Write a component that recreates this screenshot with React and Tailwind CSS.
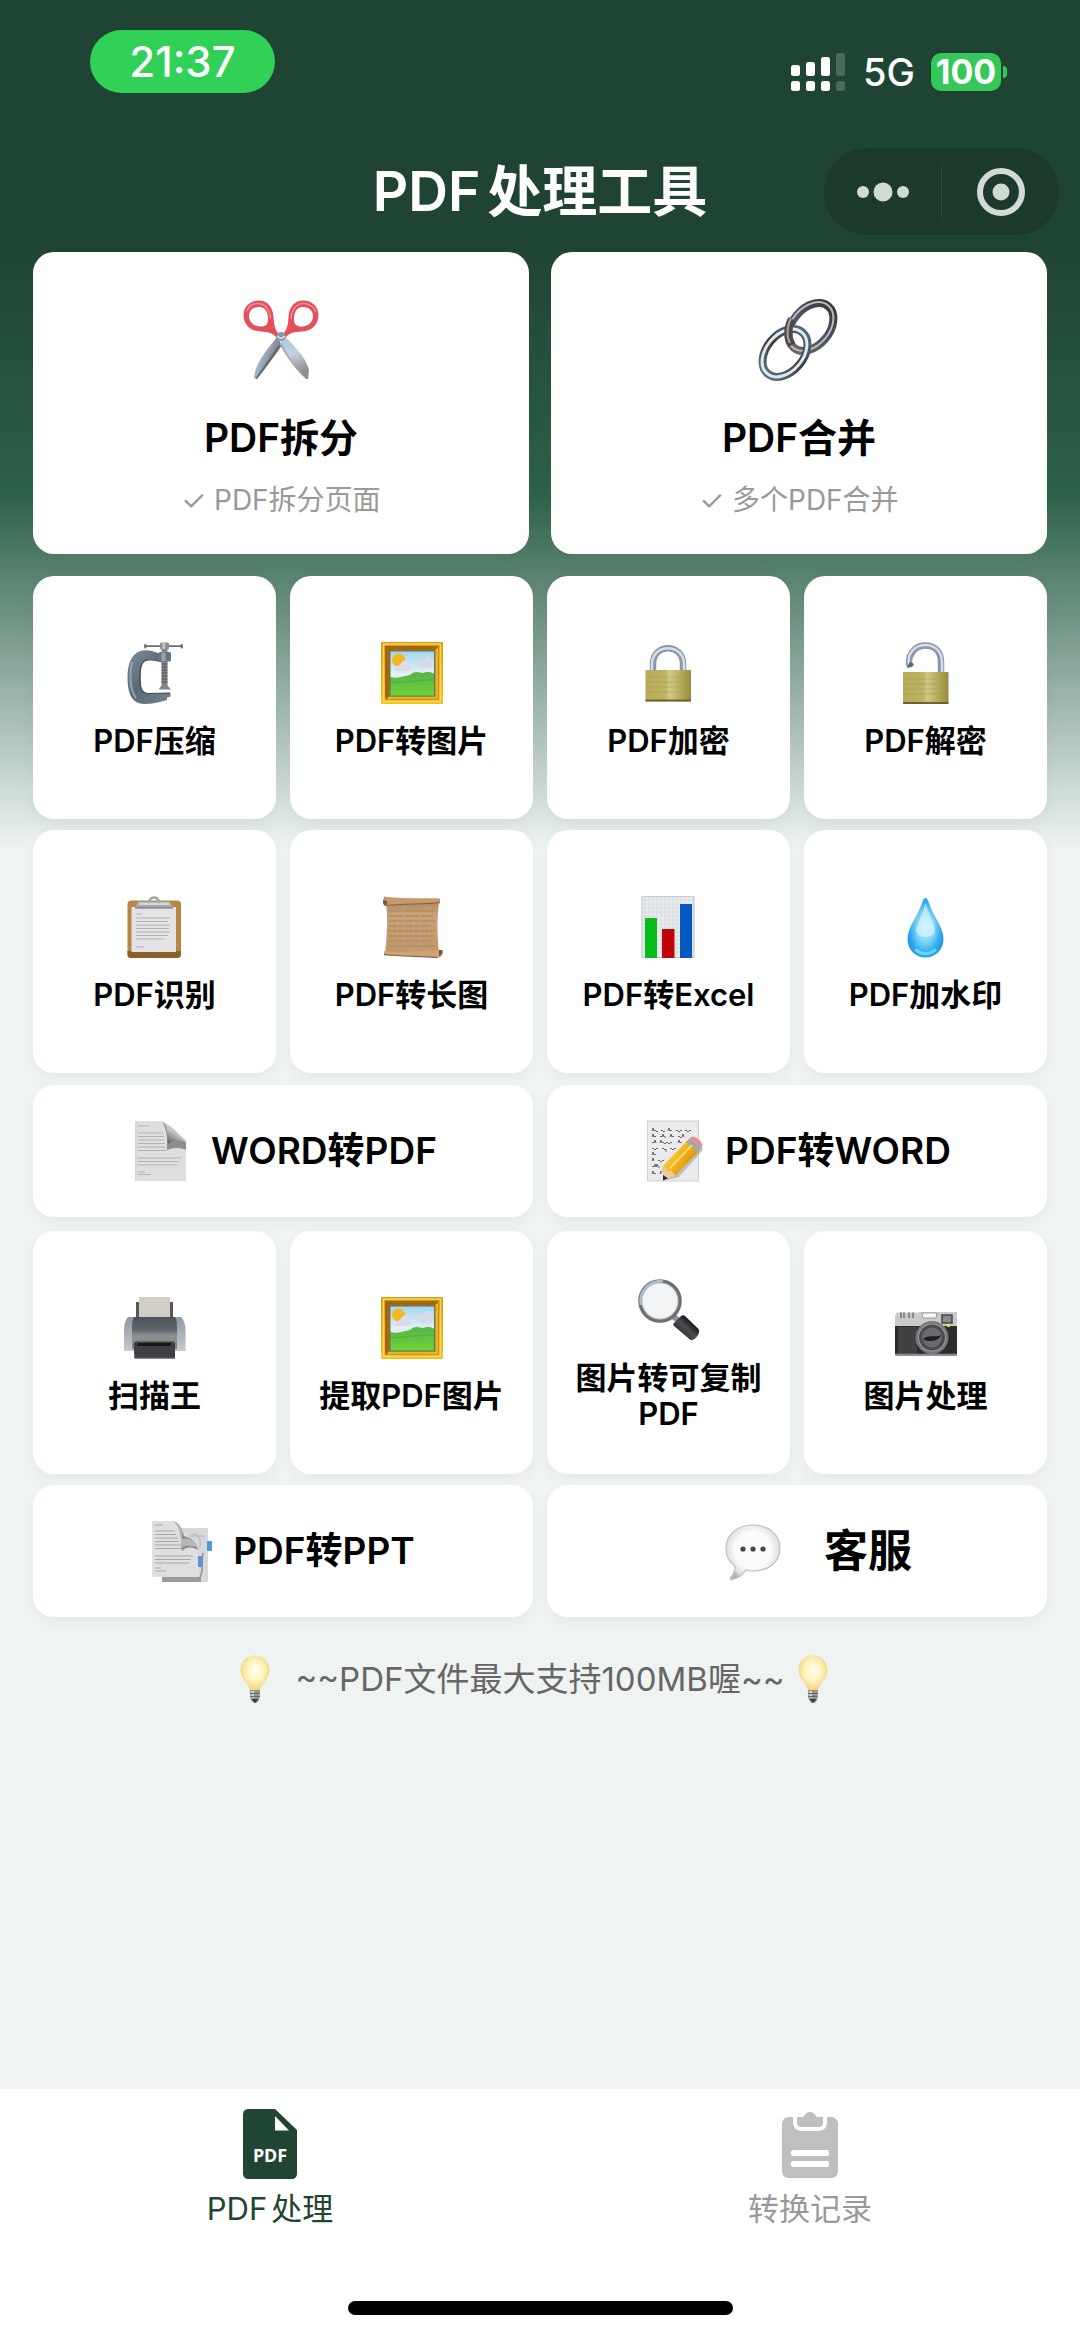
import { useState } from 'react'

/* ---------- Icons for the two large cards (80 x 80) ---------- */

const ScissorsIcon = () => (
    <svg viewBox="0 0 80 80" className="w-20 h-20" aria-hidden="true">
        <defs>
            <linearGradient id="bladeL" x1="0" y1="0" x2="1" y2="0.6">
                <stop offset="0.25" stopColor="#a9cfe0" />
                <stop offset="0.6" stopColor="#8f9aa6" />
                <stop offset="1" stopColor="#5d5458" />
            </linearGradient>
            <linearGradient id="bladeR" x1="0" y1="0" x2="0.3" y2="1">
                <stop offset="0" stopColor="#9ccbe2" />
                <stop offset="0.5" stopColor="#c3d3dc" />
                <stop offset="1" stopColor="#8d8a92" />
            </linearGradient>
        </defs>
        <path d="M36 37 C27 48 17 60 14 72 L13 78 L16 79 C24 69 33 56 41 45 Z" fill="url(#bladeL)" />
        <path d="M41 44 L37 51 L16 79 L14.500 78.500 L37 46 Z" fill="#6b6468" />
        <path d="M43 36 C54 46 65 58 68 70 L67 79 L65 79 C56 70 47 58 39 44 Z" fill="url(#bladeR)" />
        <path d="M41 44 C48 58 56 69 66 79 L65 79 C56 71 46 58 39.500 46 Z" fill="#b1a4ab" />
        <path
            fillRule="evenodd"
            d="M17 0.500 C27 0 32 8 32.500 17 C33 25 34 30 38 34 L36 38 C31 32 26 32 20 31.500 C9 31.500 2.500 24 2.500 15 C2.500 7 8.500 1 17 0.500 Z M18 7 C11.500 7 8 11 8 16 C8 22 13 26.500 19 26.500 C25 26.500 27.500 24 27 18 C26.500 11 24 7 18 7 Z"
            fill="#e2505b"
        />
        <path
            fillRule="evenodd"
            d="M63 0.500 C53 0 48 8 47.500 17 C47 25 46 30 42 34 L44 38 C49 32 54 32 60 31.500 C71 31.500 77.500 24 77.500 15 C77.500 7 71.500 1 63 0.500 Z M62 7 C68.500 7 72 11 72 16 C72 22 67 26.500 61 26.500 C55 26.500 52.500 24 53 18 C53.500 11 56 7 62 7 Z"
            fill="#e2505b"
        />
        <path d="M6 11 C8 5 13 3 18 3.500 C25 4 29 11 29.500 19" fill="none" stroke="#f58b92" strokeWidth="1.500" />
        <path d="M50 19 C50.500 9 56 3 63 3.500 C69 4 73 7 75 12" fill="none" stroke="#f58b92" strokeWidth="1.500" />
        <circle cx="40" cy="36.500" r="4.500" fill="#8899a8" />
        <path d="M36.500 36 C38 39 42 39 43.500 36" fill="none" stroke="#e6f1f7" strokeWidth="1.500" />
    </svg>
)

const LinkIcon = () => (
    <svg viewBox="0 0 80 80" className="w-20 h-20 overflow-visible" aria-hidden="true">
        <defs>
            <linearGradient id="ringA" x1="0" y1="0" x2="1" y2="0">
                <stop offset="0" stopColor="#6d6467" />
                <stop offset="0.5" stopColor="#4b5562" />
                <stop offset="1" stopColor="#3f3739" />
            </linearGradient>
            <linearGradient id="ringB" x1="0" y1="0" x2="1" y2="0">
                <stop offset="0" stopColor="#57707f" />
                <stop offset="0.5" stopColor="#3f3c3b" />
                <stop offset="1" stopColor="#4f6675" />
            </linearGradient>
        </defs>
        <g fill="none">
            <ellipse cx="52" cy="27" rx="27" ry="18.500" transform="rotate(-50 52 27)" stroke="url(#ringA)" strokeWidth="8" />
            <ellipse cx="51.500" cy="26.500" rx="27.500" ry="19" transform="rotate(-50 51.500 26.500)" stroke="#b9bdc6" strokeWidth="2" />
            <ellipse cx="26" cy="53" rx="27" ry="18.500" transform="rotate(-50 26 53)" stroke="url(#ringB)" strokeWidth="8" />
            <ellipse cx="25.500" cy="53" rx="27" ry="18.500" transform="rotate(-50 25.500 53)" stroke="#dfe9f0" strokeWidth="3" />
            {/* piece of the upper ring that passes over the lower one */}
            <path d="M33 19 C28 28 28 38 33 45" stroke="#4e4648" strokeWidth="8" />
            <path d="M32 18 C27 28 28 38 31 43" stroke="#a29ea3" strokeWidth="2" />
        </g>
    </svg>
)

/* ---------- Icons for the tiles (62 x 62) ---------- */

const Glyph = ({ children }) => (
    <svg viewBox="0 0 62 62" className="w-[62px] h-[62px] shrink-0 overflow-visible" aria-hidden="true">
        {children}
    </svg>
)

const ClampIcon = () => (
    <Glyph>
        <defs>
            <linearGradient id="clampBody" x1="0" y1="0" x2="1" y2="1">
                <stop offset="0" stopColor="#7f919c" />
                <stop offset="0.45" stopColor="#5b6b76" />
                <stop offset="1" stopColor="#71838e" />
            </linearGradient>
        </defs>
        <path d="M38 13 C31 9 22 7 16 9 C6 13 3.500 24 3.500 36 C3.500 53 9 62 20 62 C29 62 36 60 43 58 L43 55.500 L46.500 54.500 L46.500 51 L24 51.500 C18 51 16.500 46 16.500 36 C16.500 25 18 18.500 24 18.500 C30 18.500 34 19.500 38 20.500 Z" fill="url(#clampBody)" />
        <path d="M8 20 C5 32 6 48 12 56" fill="none" stroke="#93a5b0" strokeWidth="2" />
        <path d="M24 18 C17 18 16 26 16 36 C16 46 17 51 24 51.500 L46 51" fill="none" stroke="#3c4750" strokeWidth="1.200" />
        <rect x="37.500" y="6" width="6" height="38" fill="#848484" />
        <path d="M37.500 22 H43.500 M37.500 25 H43.500 M37.500 28 H43.500 M37.500 31 H43.500 M37.500 34 H43.500 M37.500 37 H43.500 M37.500 40 H43.500" stroke="#4f4f50" strokeWidth="1" />
        <rect x="34.500" y="10" width="12.500" height="9.500" rx="1.500" fill="#667681" />
        <rect x="37.500" y="10.500" width="4" height="8.500" fill="#94a4ae" />
        <path d="M21 4.200 H58" stroke="#6d6d6d" strokeWidth="1.800" />
        <rect x="20" y="2" width="2.500" height="4.500" rx="1" fill="#7b7b7b" />
        <rect x="56.500" y="2" width="2.500" height="4.500" rx="1" fill="#7b7b7b" />
        <rect x="36" y="0.500" width="9" height="7" rx="1.500" fill="#8b8f92" />
        <rect x="38.500" y="1" width="2.500" height="6" fill="#c6c9cb" />
        <path d="M38 43 H43 L47 47.500 H34.500 Z" fill="#7c868d" />
    </Glyph>
)

const PictureIcon = () => (
    <Glyph>
        <defs>
            <linearGradient id="picFrame" x1="0" y1="0" x2="0" y2="1">
                <stop offset="0" stopColor="#d49a18" />
                <stop offset="1" stopColor="#f3c125" />
            </linearGradient>
            <linearGradient id="picSky" x1="0" y1="0" x2="0" y2="1">
                <stop offset="0" stopColor="#9fd6ef" />
                <stop offset="0.5" stopColor="#e6eef5" />
            </linearGradient>
            <linearGradient id="picGrass" x1="0" y1="0" x2="0" y2="1">
                <stop offset="0" stopColor="#55b34a" />
                <stop offset="1" stopColor="#6fd436" />
            </linearGradient>
        </defs>
        <rect width="62" height="62" rx="1" fill="url(#picFrame)" />
        <rect x="2.500" y="2" width="57" height="57.500" fill="none" stroke="#f9d64f" strokeWidth="1.500" />
        <path d="M4 4 H58 L53 9 H9 V54 L4 58 Z" fill="#a4660f" />
        <path d="M58 4 V58 H4 L9 54 H53.500 V9 Z" fill="#cf9112" />
        <path d="M56 7 V56 H7" fill="none" stroke="#efc02f" strokeWidth="1.500" />
        <rect x="9" y="9" width="44.500" height="45" fill="url(#picSky)" />
        <circle cx="17.500" cy="18" r="6.500" fill="#f3b81a" />
        <path d="M14 28 C13 24 18 25 20 21 C23 17 28 18 28 23 C32 25 30 29 26 29 H16 Z" fill="#dcdbe8" />
        <path d="M34 20 C35 17 39 16 41 19 C44 17 44 13 48 14 C53 16 53 22 50 26 H42 C39 23 35 24 34 20 Z" fill="#d5dbea" />
        <path d="M9 35 C18 37 23 34 29 33 C35 28 38 31 42 31 C47 29 50 30 53.500 32 V54 H9 Z" fill="url(#picGrass)" />
        <path d="M9 40 C21 43 31 37 53.500 38" fill="none" stroke="#4fb03e" strokeWidth="1.200" />
        <rect x="9" y="9" width="44.500" height="45" fill="none" stroke="#5f7a6e" strokeWidth="1" />
    </Glyph>
)

const BrassGradient = ({ id }) => (
    <defs>
        <linearGradient id={id} x1="0" y1="0" x2="1" y2="0">
            <stop offset="0" stopColor="#b8aa58" />
            <stop offset="0.45" stopColor="#bfb365" />
            <stop offset="0.52" stopColor="#d2ca8c" />
            <stop offset="0.75" stopColor="#b9ad5d" />
            <stop offset="1" stopColor="#95893f" />
        </linearGradient>
    </defs>
)

const LockIcon = () => (
    <Glyph>
        <BrassGradient id="brassA" />
        <path d="M15 30 V22 C15 1 45 1 45 22 V30" fill="none" stroke="#8b97a6" strokeWidth="6.500" />
        <path d="M14 30 V22 C14 1 46 1 46 22 V30" fill="none" stroke="#d3deec" strokeWidth="2.500" />
        <rect x="7.500" y="28" width="45.500" height="31.500" rx="1" fill="url(#brassA)" />
        <path d="M8 35 H52 M8 40 H52 M8 45 H52 M8 50 H52" stroke="#ada04c" strokeWidth="0.600" />
        <rect x="7.500" y="57.500" width="45.500" height="2" fill="#6f642b" />
    </Glyph>
)

const UnlockIcon = () => (
    <Glyph>
        <BrassGradient id="brassB" />
        <path d="M15.500 25 C11 17 18 3.500 30 3.500 C41 3.500 46 11 46 20 V32" fill="none" stroke="#8b97a6" strokeWidth="6.500" />
        <path d="M14.500 23 C11 15 18 3 30 3 C42 3 47 12 47 20 V31" fill="none" stroke="#d3deec" strokeWidth="2.500" />
        <path d="M15 20 L19 22 L17 25 L12 25 Z" fill="#5e6670" />
        <rect x="8" y="30" width="45.500" height="32" rx="1" fill="url(#brassB)" />
        <path d="M8 37 H53 M8 42 H53 M8 47 H53 M8 52 H53" stroke="#ada04c" strokeWidth="0.600" />
        <rect x="8" y="60" width="45.500" height="2" fill="#6f642b" />
    </Glyph>
)

const ClipboardIcon = () => (
    <Glyph>
        <rect x="3.500" y="4.500" width="53.500" height="57.500" rx="4" fill="#b78745" />
        <path d="M3.500 55 H57 V58 C57 61 55 62 53 62 H7 C5 62 3.500 61 3.500 58 Z" fill="#8b5f28" />
        <rect x="7.500" y="11" width="44.500" height="45" fill="#e4e4e6" />
        <path d="M12 18 H18 M12 22 H46 M12 25.500 H44 M12 29 H46 M12 32.500 H45 M12 36 H46 M12 39.500 H44 M12 43 H40 M12 51 H20" stroke="#b3b3b6" strokeWidth="1" />
        <path d="M14 5.500 H46 L49 12 H11 Z" fill="#a6a8ac" />
        <path d="M15 6.500 H45 L46 9 H14 Z" fill="#d3d5d8" />
        <path d="M11 12 H49" stroke="#6d6d70" strokeWidth="1" />
        <path d="M24 6 C26 6 25 1.500 30 1.500 C35 1.500 34 6 36 6" fill="none" stroke="#a3a6ab" strokeWidth="2.500" />
    </Glyph>
)

const ScrollIcon = () => (
    <Glyph>
        <defs>
            <linearGradient id="parchment" x1="0" y1="0" x2="0" y2="1">
                <stop offset="0" stopColor="#b08a61" />
                <stop offset="0.25" stopColor="#c8a176" />
                <stop offset="1" stopColor="#c2996c" />
            </linearGradient>
        </defs>
        <path d="M5 7 C7 22 6 40 4 57 L58 57 C56 40 56 22 58 6 Z" fill="url(#parchment)" />
        <path d="M7 15 H54 M7 20 H52 M7 25 H55 M7 30 H50 M7 35 H54 M7 40 H53 M7 45 H51 M7 50 H54" stroke="#a8835c" strokeWidth="1" strokeDasharray="9 1 5 1" />
        <path d="M3 0.500 C20 3 42 2 59 2.500 L59 6.500 C42 9 22 7.500 6 10 C3 11 2 8 2 6 Z" fill="#c59a6c" />
        <path d="M2 4 L6 5 L6 9.500 C3 10 2 8 2 4 Z" fill="#7b5735" />
        <path d="M6 9.500 C22 7.500 42 8.500 59 6.500" fill="none" stroke="#856040" strokeWidth="1.200" />
        <path d="M3 55 C22 58 42 54 61 54 L61 59 C60 62 57 61.500 55 61.500 L3 59.500 Z" fill="#cea377" />
        <path d="M3 58.500 C20 60.500 40 60 57 61.500" fill="none" stroke="#8c6744" strokeWidth="1.200" />
        <path d="M58 54 H61.500 V58 L58 60 Z" fill="#765334" />
    </Glyph>
)

const ChartIcon = () => (
    <Glyph>
        <rect x="3.500" y="0" width="53" height="62" fill="#e9ecef" />
        <path
            d="M7 0 V62 M11 0 V62 M15 0 V62 M19 0 V62 M23 0 V62 M27 0 V62 M31 0 V62 M35 0 V62 M39 0 V62 M43 0 V62 M47 0 V62 M51 0 V62 M55 0 V62 M3 4 H56 M3 8 H56 M3 12 H56 M3 16 H56 M3 20 H56 M3 24 H56 M3 28 H56 M3 32 H56 M3 36 H56 M3 40 H56 M3 44 H56 M3 48 H56 M3 52 H56 M3 56 H56"
            stroke="#d3dae1"
            strokeWidth="0.800"
        />
        <rect x="4" y="0.500" width="52" height="61" fill="none" stroke="#c7c9cb" />
        <rect x="7" y="22" width="12" height="40" fill="#06bd17" />
        <rect x="24" y="33" width="12.500" height="29" fill="#c00508" />
        <rect x="42" y="8" width="12" height="54" fill="#0458c2" />
    </Glyph>
)

const DropIcon = () => (
    <Glyph>
        <defs>
            <radialGradient id="dropFill" cx="0.5" cy="0.500" r="0.550">
                <stop offset="0" stopColor="#c9f1fd" />
                <stop offset="0.45" stopColor="#7fd5f8" />
                <stop offset="0.8" stopColor="#2aa8ee" />
                <stop offset="1" stopColor="#2397e0" />
            </radialGradient>
        </defs>
        <path d="M30.500 2 C32 2 33 4 34 7 C38 20 48.500 31 48.500 43 C48.500 54 40 61.500 30.500 61.500 C21 61.500 12.500 54 12.500 43 C12.500 31 23 20 27 7 C28 4 29 2 30.500 2 Z" fill="url(#dropFill)" />
        <path d="M30.500 7 C33 17 40 27 40 35 C38 43 23 43 21 35 C22 27 28 17 30.500 7 Z" fill="#e2f8ff" opacity="0.6" />
        <path d="M21 54 C27 59 34 59 40 54" fill="none" stroke="#63d6fb" strokeWidth="3" strokeLinecap="round" />
    </Glyph>
)

const PageIcon = () => (
    <Glyph>
        <defs>
            <linearGradient id="curlShade" x1="0.300" y1="1" x2="0.900" y2="0.100">
                <stop offset="0" stopColor="#57585a" />
                <stop offset="0.5" stopColor="#c2c3c5" />
                <stop offset="1" stopColor="#f0f0f1" />
            </linearGradient>
        </defs>
        <path d="M6 1 H34 L57 20 V61 H6 Z" fill="#dedee0" />
        <path d="M9 6 H20 M9 13 H34 M9 16.500 H35 M9 20 H35 M9 23.500 H36 M9 27 H36 M9 30.500 H38 M9 38 H52 M9 41.500 H50 M9 45 H48 M9 52 H16 M9 54.500 H22" stroke="#b2b3b6" strokeWidth="1" />
        <path d="M33 2 C39 10 38 21 38 30 C43 28 50 27 57 30 V22 Z" fill="#77787b" opacity="0.8" />
        <path d="M32 1 C40 5 38 16 39 24 C44 19 52 20 57 23 C51 14 42 5 32 1 Z" fill="url(#curlShade)" />
        <rect x="6.500" y="1.500" width="1" height="59" fill="#cfcfd1" />
    </Glyph>
)

const MemoIcon = () => (
    <Glyph>
        <defs>
            <linearGradient id="pencilBody" x1="0" y1="0" x2="1" y2="0.700">
                <stop offset="0" stopColor="#fbd957" />
                <stop offset="0.5" stopColor="#f5b81c" />
                <stop offset="1" stopColor="#c57f10" />
            </linearGradient>
        </defs>
        <rect x="4.500" y="1" width="51" height="60" fill="#ebebec" stroke="#d0d0d2" />
        <path
            d="M9 11 l1 -3 l1 3 q1 -2 2 0 t2 0 M18 11 q1 -2 2 0 t2 0 M25 11 l1 -3 l1 3 q1 -2 2 0 M33 11 q1 -2 2 0 t2 0 t2 0 M42 11 q1 -2 2 0 t2 0 t2 0 M9 17 l1 -3 l1 3 q1 -2 2 0 M17 17 q1 -2 2 0 l1 -3 l1 3 t2 0 M27 17 l1 -3 l1 3 q1 -2 2 0 M35 17 q1 -2 2 0 t2 0 l1 -3 l1 3 M9 23 q1 -2 2 0 l1 -3 l1 3 M17 23 l1 -3 l1 3 q1 -2 2 0 t2 0 t2 0 t2 0 t2 0 M35 23 l1 -3 l1 3 q1 -2 2 0 M9 29 q1 -2 2 0 t2 0 t2 0 M19 29 q1 -2 2 0 t2 0 l0 3 M27 29 q1 -2 2 0 t2 0 t2 0 M9 35 l1 -3 l1 3 q1 -2 2 0 M9 41 l1 -3 l1 3 M15 41 q1 -2 2 0 t2 0 t2 0 M9 47 q1 -2 2 0 l1 -3 l1 3 l1 -3 l1 3 t2 0 M9 54 l1 -3 l1 3 q1 -2 2 0 M17 54 l1 -3 l0 3"
            fill="none"
            stroke="#5a5a5d"
            strokeWidth="0.900"
        />
        <path d="M24 60 L36 57 L60 30 L56 22 Z" fill="#8a8a8d" opacity="0.45" />
        <path d="M19 47 L44 21 L56 31 L32 56 L21 60 Z" fill="url(#pencilBody)" />
        <path d="M19 47 C22 46 24 48 24 51 C28 50 31 52 32 56 L21 60 Z" fill="#eccb98" />
        <path d="M20 55 L25 58.500 L20 60.500 Z" fill="#2d2d2f" />
        <path d="M43 22 L47 18 L59 28 L55 32 Z" fill="#a4a6a9" />
        <path d="M47 18 C50 14 61 21 59 28 Z" fill="#ee8790" />
        <path d="M27 48 L49 25" stroke="#fde58a" strokeWidth="1.500" />
    </Glyph>
)

const PrinterIcon = () => (
    <Glyph>
        <defs>
            <linearGradient id="printerTop" x1="0" y1="0" x2="0" y2="1">
                <stop offset="0" stopColor="#4a525b" />
                <stop offset="0.4" stopColor="#5f666d" />
                <stop offset="0.6" stopColor="#8e9194" />
                <stop offset="1" stopColor="#7c7f82" />
            </linearGradient>
            <linearGradient id="printerSide" x1="0" y1="0" x2="0" y2="1">
                <stop offset="0" stopColor="#8f98a1" />
                <stop offset="1" stopColor="#c6c9ca" />
            </linearGradient>
        </defs>
        <rect x="12" y="5" width="3" height="18" fill="#55585b" />
        <rect x="46" y="5" width="3" height="18" fill="#55585b" />
        <rect x="15" y="0" width="31" height="23" fill="#d3cec5" />
        <path d="M4 20 H10 V54 H0 V32 C0 27 2 22 4 20 Z" fill="url(#printerSide)" />
        <path d="M57 20 H51 V54 H61.500 V32 C61.500 27 59 22 57 20 Z" fill="url(#printerSide)" />
        <path d="M10 20 H51 C53 23 53 27 53 32 V52 H8 V32 C8 27 8 23 10 20 Z" fill="url(#printerTop)" />
        <path d="M10 54 V47 C10 45 12 44.500 14 44.500 H48 C50 44.500 51 45 51 47 V61.500 H10.500 Z" fill="#3f4043" />
        <path d="M14 46 H47 V49 H13 Z" fill="#151618" />
        <path d="M10.500 61 H51" stroke="#6a6b6e" strokeWidth="1" />
    </Glyph>
)

const MagnifierIcon = () => (
    <Glyph>
        <defs>
            <linearGradient id="handle" x1="0" y1="1" x2="1" y2="0">
                <stop offset="0" stopColor="#101113" />
                <stop offset="0.5" stopColor="#4a4d50" />
                <stop offset="0.7" stopColor="#1b1c1e" />
                <stop offset="1" stopColor="#0b0b0c" />
            </linearGradient>
        </defs>
        <path d="M36 38 L42 43" stroke="#8f9397" strokeWidth="6" />
        <path d="M36 44 L43 37 C44 36 46 36 47 37 L60.500 50 C63 54 57 62 52.500 61 L36 47 C35 46 35 45 36 44 Z" fill="url(#handle)" />
        <circle cx="22" cy="22" r="20" fill="#f3f4f6" stroke="#6c6f73" strokeWidth="3.500" />
        <path d="M3 26 C0 12 12 1 25 2" fill="none" stroke="#a9bfd6" strokeWidth="2.500" />
        <circle cx="22" cy="22" r="18" fill="none" stroke="#b9bcc0" strokeWidth="1" />
    </Glyph>
)

const CameraIcon = () => (
    <Glyph>
        <rect x="0" y="27" width="62" height="31.500" fill="#2c2c2e" />
        <rect x="3" y="30" width="19" height="28" fill="#414144" />
        <path d="M0 20 C0 17 1 15.500 3 15.500 H23 L25 15 H62 V29 H0 Z" fill="#c9cacb" />
        <path d="M6 15.500 V21 M9 15.500 V21 M14 15.500 V21 M18 15.500 V21" stroke="#808185" strokeWidth="1.800" />
        <path d="M27 16 H42 L41 21 H28 Z" fill="#f7f7f7" stroke="#8a8b8d" strokeWidth="0.800" />
        <rect x="47" y="18" width="10" height="8" fill="#8b8c86" stroke="#454649" strokeWidth="1.500" />
        <circle cx="53.500" cy="28.500" r="1.800" fill="#f0e130" />
        <circle cx="37" cy="40.500" r="16.500" fill="#77797c" />
        <circle cx="37" cy="40.500" r="14" fill="#9b9da0" />
        <circle cx="37" cy="40.500" r="13" fill="#4a4b4e" />
        <circle cx="37" cy="40.500" r="10" fill="#6a6c6f" />
        <path d="M28 42 C34 37 41 41 46 38 C45 44 33 46 28 42 Z" fill="#1e1e20" />
        <path d="M0 57.500 H62" stroke="#8a8a8c" strokeWidth="1.500" />
    </Glyph>
)

const SlidesIcon = () => (
    <Glyph>
        <rect x="11" y="8" width="46" height="54" fill="#d8d8da" />
        <rect x="11" y="57" width="39" height="5" fill="#9b9b9e" />
        <path d="M42 14 C48 14 50 20 49 28 M38 16 H54" fill="none" stroke="#bfbfc2" strokeWidth="1.500" />
        <rect x="56" y="21" width="5" height="10" rx="1" fill="#4f97dd" />
        <path d="M1 1 H22 L47 25 V57 H1 Z" fill="#dfdfe1" />
        <path d="M4 5 H12 M4 11 H24 M4 14.500 H25 M4 18 H27 M4 21.500 H28 M4 25 H30 M4 28.500 H32 M4 36 H42 M4 39.500 H40 M4 43 H38 M4 48 H10 M4 51 H15" stroke="#a6a7aa" strokeWidth="1" />
        <path d="M22 1 C32 6 29 16 31 31 C36 26 42 27 47 30 C44 18 38 18 33 16 C31 8 28 3 22 1 Z" fill="#8d8e91" />
        <path d="M22 1 C30 3 32 10 31 19 C38 17 44 20 47 27 C45 27 36 24 31 27 C29 16 29 7 22 1 Z" fill="#b6b7b9" />
        <rect x="47" y="36" width="5" height="11" rx="1" fill="#4f97dd" />
        <path d="M52 33 C50 44 53 50 49 57" fill="none" stroke="#8f8f92" strokeWidth="1.500" />
    </Glyph>
)

const BubbleIcon = () => (
    <Glyph>
        <defs>
            <radialGradient id="bubble" cx="0.500" cy="0.450" r="0.550">
                <stop offset="0.6" stopColor="#fbfbfb" />
                <stop offset="0.9" stopColor="#dededf" />
                <stop offset="1" stopColor="#b7b7b8" />
            </radialGradient>
        </defs>
        <path d="M31 5 C47 5 58 15 58 28 C58 42 47 51 31 51 C28 51 26 51 24 50 C21 55 15 58.500 9 60 C8 59 8.500 58 9 57 C12 54 13 50 13 46 C7 42 4 36 4 28 C4 15 15 5 31 5 Z" fill="url(#bubble)" stroke="#c0c0c1" strokeWidth="1.200" />
        <circle cx="21" cy="29" r="2.600" fill="#454547" />
        <circle cx="31" cy="29" r="2.600" fill="#454547" />
        <circle cx="41" cy="29" r="2.600" fill="#454547" />
    </Glyph>
)

const BulbIcon = () => (
    <svg viewBox="0 0 32 48" className="w-8 h-12 shrink-0" aria-hidden="true">
        <defs>
            <radialGradient id="bulbGlow" cx="0.500" cy="0.420" r="0.600">
                <stop offset="0" stopColor="#fffef2" />
                <stop offset="0.5" stopColor="#fdf3bd" />
                <stop offset="1" stopColor="#edcb6b" />
            </radialGradient>
        </defs>
        <path d="M16 0.500 C25 0.500 30.500 7 30.500 15 C30.500 23 24 27 21 35 C20 37 12 37 11 35 C8 27 1.500 23 1.500 15 C1.500 7 7 0.500 16 0.500 Z" fill="url(#bulbGlow)" />
        <path d="M11 35 H21 L20.500 43 C20 46 18 48 16 48 C14 48 12 46 11.500 43 Z" fill="#95958f" />
        <path d="M12 36 H15 V43 H13 Z" fill="#d3d3cf" />
        <path d="M11 38.500 H21 M11 41.500 H21" stroke="#6a6a66" strokeWidth="1" />
        <path d="M12.500 44 H19.500 L16 48 Z" fill="#3b3b3a" />
    </svg>
)

/* ---------- Tab bar icons ---------- */

const PdfTabIcon = () => (
    <svg viewBox="0 0 54 70" className="w-[54px] h-[70px]" aria-hidden="true">
        <path d="M6 0 H32 L54 21 V64 C54 68 52 70 48 70 H6 C2 70 0 68 0 64 V6 C0 2 2 0 6 0 Z" fill="currentColor" />
        <path d="M32 7 L46 21.500 H32 Z" fill="#fff" />
        <text x="27" y="53" textAnchor="middle" fontSize="18" fontWeight="700" fontFamily="'Noto Sans', sans-serif" fill="#fff">
            PDF
        </text>
    </svg>
)

const RecordTabIcon = () => (
    <svg viewBox="0 0 56 70" className="w-[56px] h-[70px]" aria-hidden="true">
        <path d="M7 8 H49 C53 8 56 11 56 15 V62 C56 66 53 69 49 69 H7 C3 69 0 66 0 62 V15 C0 11 3 8 7 8 Z" fill="#bfbfbf" />
        <path d="M13 6 V13 C13 18 16 20 21 20 H35 C40 20 43 18 43 13 V6" fill="none" stroke="#fff" strokeWidth="4" />
        <path d="M15 9 H20 C22 9 22 3 28 3 C34 3 34 9 36 9 H41 V13 C41 17 39 18 35 18 H21 C17 18 15 17 15 13 Z" fill="#bfbfbf" />
        <rect x="9" y="41" width="38" height="6" rx="2" fill="#fff" />
        <rect x="9" y="52" width="38" height="6" rx="2" fill="#fff" />
    </svg>
)

/* ---------- Data ---------- */

const mainTools = [
    { title: 'PDF拆分', hint: '✓ PDF拆分页面', Icon: ScissorsIcon },
    { title: 'PDF合并', hint: '✓ 多个PDF合并', Icon: LinkIcon },
]

const tools = [
    { title: 'PDF压缩', Icon: ClampIcon },
    { title: 'PDF转图片', Icon: PictureIcon },
    { title: 'PDF加密', Icon: LockIcon },
    { title: 'PDF解密', Icon: UnlockIcon },
    { title: 'PDF识别', Icon: ClipboardIcon },
    { title: 'PDF转长图', Icon: ScrollIcon },
    { title: 'PDF转Excel', Icon: ChartIcon },
    { title: 'PDF加水印', Icon: DropIcon },
]

const imageTools = [
    { title: '扫描王', Icon: PrinterIcon },
    { title: '提取PDF图片', Icon: PictureIcon },
    { title: '图片转可复制PDF', Icon: MagnifierIcon },
    { title: '图片处理', Icon: CameraIcon },
]

/* ---------- Building blocks ---------- */

const StatusBar = () => (
    <div className="flex items-end justify-between pt-[30px] pl-[90px] pr-[73px]">
        <div className="flex h-[63px] w-[185px] items-center justify-center rounded-full bg-[#31d158] text-[42px] font-medium">
            21:37
        </div>
        <div className="flex h-[42px] items-center">
            <svg viewBox="0 0 54 38" className="w-[54px] h-[38px]" aria-hidden="true">
                <g fill="#fff">
                    <rect x="0" y="12" width="9" height="11" rx="2.500" />
                    <rect x="15" y="9" width="9" height="14" rx="2.500" />
                    <rect x="30" y="4" width="9" height="19" rx="2.500" />
                    <rect x="0" y="28" width="9" height="10" rx="2.500" />
                    <rect x="15" y="28" width="9" height="10" rx="2.500" />
                    <rect x="30" y="28" width="9" height="10" rx="2.500" />
                </g>
                <g fill="#4a6a5b">
                    <rect x="45" y="0" width="9" height="23" rx="2.500" />
                    <rect x="45" y="28" width="9" height="10" rx="2.500" />
                </g>
            </svg>
            <span className="ml-[18px] text-[38px] leading-none font-medium">5G</span>
            <div className="ml-4 flex h-[38px] w-[70px] items-center justify-center rounded-[10px] bg-[#34c759] text-[34px] leading-none font-bold">
                100
            </div>
            <div className="ml-[2px] h-3 w-1 rounded-r-full bg-[#34c759]" />
        </div>
    </div>
)

const Capsule = () => (
    <div className="flex h-[87px] w-[235px] items-center justify-self-end rounded-full bg-[#1c3a2b]">
        <button type="button" aria-label="更多" className="flex flex-1 items-center justify-center">
            <svg viewBox="0 0 52 20" className="w-[52px] h-5" aria-hidden="true">
                <g fill="#d1dad5">
                    <circle cx="6" cy="10" r="6" />
                    <circle cx="26" cy="10" r="9.500" />
                    <circle cx="46" cy="10" r="6" />
                </g>
            </svg>
        </button>
        <div className="h-[54px] w-px bg-[#2b4a3a]" />
        <button type="button" aria-label="关闭" className="flex flex-1 items-center justify-center">
            <svg viewBox="0 0 48 48" className="w-12 h-12" aria-hidden="true">
                <circle cx="24" cy="24" r="21" fill="none" stroke="#d1dad5" strokeWidth="6" />
                <circle cx="24" cy="24" r="8.500" fill="#d1dad5" />
            </svg>
        </button>
    </div>
)

const MainCard = ({ title, hint, Icon }) => (
    <button type="button" className="flex flex-col items-center rounded-[21px] bg-white pt-12 pb-9">
        <Icon />
        <span className="mt-[34px] text-[39px] leading-12 font-semibold">{title}</span>
        <span className="mt-5 text-[28px] leading-9 text-[#999]">{hint}</span>
    </button>
)

const Tile = ({ title, Icon }) => (
    <button
        type="button"
        className="flex aspect-square flex-col items-center justify-center rounded-[21px] bg-white shadow-[0_6px_16px_rgba(0,0,0,0.04)]"
    >
        <span className="flex h-[72px] items-center">
            <Icon />
        </span>
        <span className="mt-[14px] px-5 text-[31px] leading-9 font-semibold">{title}</span>
    </button>
)

const WideTile = ({ className = '', children }) => (
    <button
        type="button"
        className={`flex h-[132px] items-center justify-center gap-5 rounded-[21px] bg-white text-[37px] font-semibold shadow-[0_6px_16px_rgba(0,0,0,0.04)] ${className}`}
    >
        {children}
    </button>
)

const TabItem = ({ label, active, onClick, children }) => (
    <button
        type="button"
        onClick={onClick}
        aria-current={active ? 'page' : undefined}
        className={`flex flex-1 flex-col items-center gap-[10px] pt-5 text-[31px] leading-10 [text-autospace:normal] ${active ? 'text-[#204533]' : 'text-[#999]'}`}
    >
        {children}
        <span>{label}</span>
    </button>
)

const App = () => {
    const [tab, setTab] = useState('tools')

    return (
        <div className="flex min-h-screen flex-col bg-[#eff4f3] bg-[linear-gradient(180deg,#204433_0px,#204433_250px,#2c6048_492px,#eff4f3_850px)] font-['Inter','Noto_Sans_CJK_SC',sans-serif] text-black">
            <header className="text-white">
                <StatusBar />
                <div className="mt-[55px] grid grid-cols-[1fr_auto_1fr] items-center pr-[21px] pl-[21px]">
                    <h1 className="col-start-2 text-[55px] leading-none font-semibold [text-autospace:normal]">PDF处理工具</h1>
                    <Capsule />
                </div>
            </header>

            <main className="px-[33px] pt-[17px]">
                <section className="grid grid-cols-2 gap-[22px]">
                    {mainTools.map((tool) => (
                        <MainCard key={tool.title} {...tool} />
                    ))}
                </section>

                <section className="mt-[22px] grid grid-cols-4 gap-x-[14px] gap-y-[11px]">
                    {tools.map((tool) => (
                        <Tile key={tool.title} {...tool} />
                    ))}
                </section>

                <section className="mt-3 grid grid-cols-2 gap-[14px]">
                    <WideTile>
                        <PageIcon />
                        <span>WORD转PDF</span>
                    </WideTile>
                    <WideTile>
                        <MemoIcon />
                        <span>PDF转WORD</span>
                    </WideTile>
                </section>

                <section className="mt-[14px] grid grid-cols-4 gap-x-[14px]">
                    {imageTools.map((tool) => (
                        <Tile key={tool.title} {...tool} />
                    ))}
                </section>

                <section className="mt-[11px] grid grid-cols-2 gap-[14px]">
                    <WideTile>
                        <SlidesIcon />
                        <span>PDF转PPT</span>
                    </WideTile>
                    <WideTile className="pl-10">
                        <BubbleIcon />
                        <span className="ml-5 text-[44px]">客服</span>
                    </WideTile>
                </section>

                <p className="mt-[38px] flex items-center justify-center pr-3 text-[33px] leading-12 text-[#666]">
                    <BulbIcon />
                    <span className="mr-3 ml-6">~~PDF文件最大支持100MB喔~~</span>
                    <BulbIcon />
                </p>
            </main>

            <nav className="mt-auto bg-white">
                <div className="flex">
                    <TabItem label="PDF处理" active={tab === 'tools'} onClick={() => setTab('tools')}>
                        <PdfTabIcon />
                    </TabItem>
                    <TabItem label="转换记录" active={tab === 'records'} onClick={() => setTab('records')}>
                        <RecordTabIcon />
                    </TabItem>
                </div>
                <div className="mx-auto mt-[72px] mb-[22px] h-[14px] w-[385px] rounded-full bg-black" />
            </nav>
        </div>
    )
}

export default App
